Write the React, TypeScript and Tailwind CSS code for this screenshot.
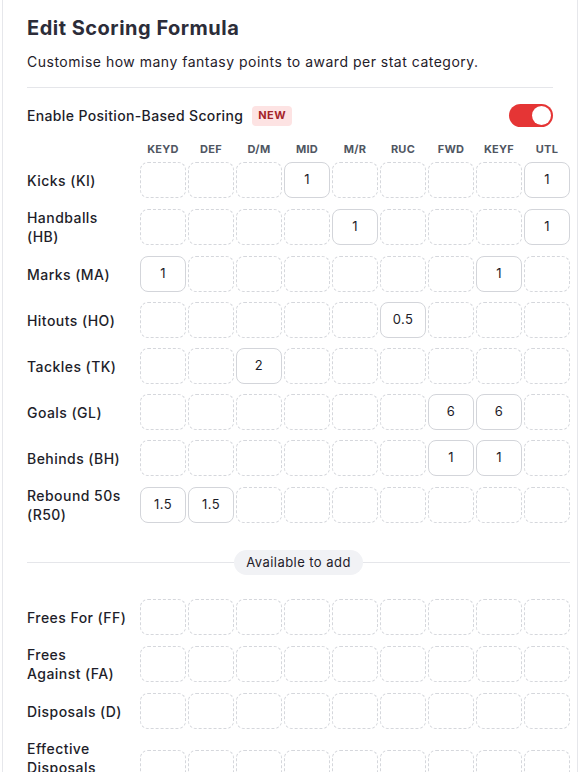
import { useState } from 'react'

const POSITIONS = ['KEYD', 'DEF', 'D/M', 'MID', 'M/R', 'RUC', 'FWD', 'KEYF', 'UTL'] as const

type Pos = (typeof POSITIONS)[number]

interface StatRow {
  label: string[]
  values: Partial<Record<Pos, string>>
}

const ACTIVE: StatRow[] = [
  { label: ['Kicks (KI)'], values: { MID: '1', UTL: '1' } },
  { label: ['Handballs', '(HB)'], values: { 'M/R': '1', UTL: '1' } },
  { label: ['Marks (MA)'], values: { KEYD: '1', KEYF: '1' } },
  { label: ['Hitouts (HO)'], values: { RUC: '0.5' } },
  { label: ['Tackles (TK)'], values: { 'D/M': '2' } },
  { label: ['Goals (GL)'], values: { FWD: '6', KEYF: '6' } },
  { label: ['Behinds (BH)'], values: { FWD: '1', KEYF: '1' } },
  { label: ['Rebound 50s', '(R50)'], values: { KEYD: '1.5', DEF: '1.5' } },
]

const AVAILABLE: StatRow[] = [
  { label: ['Frees For (FF)'], values: {} },
  { label: ['Frees', 'Against (FA)'], values: {} },
  { label: ['Disposals (D)'], values: {} },
  { label: ['Effective', 'Disposals', '(ED)'], values: {} },
]

function Cell({ value }: { value?: string }) {
  if (!value) {
    return <div className="w-[46px] h-9 rounded-lg border border-dashed border-[#d5d7dc]" />
  }
  return (
    <div className="w-[46px] h-9 rounded-lg border border-[#d3d5da] bg-white flex items-center justify-center text-[13px] text-[#1c1c28]">
      {value}
    </div>
  )
}

function Row({ row }: { row: StatRow }) {
  return (
    <div className="flex items-center">
      <div className="w-[113px] shrink-0 text-sm font-medium leading-[19px] text-[#1e1e2a]">
        {row.label.map(line => (
          <div key={line}>{line}</div>
        ))}
      </div>
      <div className="flex gap-[2px]">
        {POSITIONS.map(p => (
          <Cell key={p} value={row.values[p]} />
        ))}
      </div>
    </div>
  )
}

export default function App() {
  const [enabled, setEnabled] = useState(true)

  return (
    <div className="min-h-screen bg-white pl-[2px] pr-[4px] font-['Inter',sans-serif] tracking-[0.45px]">
      <div className="border-x border-[#e6e7eb] px-6 pt-[14px] pb-10">
        {/* Heading */}
        <h1 className="text-[20px] leading-7 font-bold tracking-[0.5px] text-[#2c2d39]">Edit Scoring Formula</h1>
        <p className="mt-[10px] text-sm leading-5 tracking-[0.5px] text-[#1f2029]">
          Customise how many fantasy points to award per stat category.
        </p>
        <div className="mt-[15px] h-px bg-[#e5e6ea]" />

        {/* Toggle */}
        <div className="mt-4 flex items-center h-[23px]">
          <span className="text-sm font-medium tracking-[0.35px] text-[#1e1e2a]">Enable Position-Based Scoring</span>
          <span className="ml-[9px] rounded px-[6px] h-5 flex items-center text-[11px] font-bold text-[#a5242a] bg-[#fde3e3]">
            NEW
          </span>
          <button
            onClick={() => setEnabled(v => !v)}
            className={`ml-auto w-11 h-[23px] rounded-full p-[2px] flex items-center ${enabled ? 'bg-[#e53535] justify-end' : 'bg-[#d1d5db] justify-start'}`}
          >
            <span className="w-[19px] h-[19px] rounded-full bg-white" />
          </button>
        </div>

        {/* Column headers */}
        <div className="mt-[14px] flex">
          <div className="w-[113px] shrink-0" />
          <div className="flex gap-[2px]">
            {POSITIONS.map(p => (
              <div key={p} className="w-[46px] text-center text-[11px] leading-4 font-bold tracking-wide text-[#505662]">
                {p}
              </div>
            ))}
          </div>
        </div>

        {/* Active stats */}
        <div className="mt-[5px] w-[543px] flex flex-col gap-[10px]">
          {ACTIVE.map(r => (
            <Row key={r.label.join(' ')} row={r} />
          ))}
        </div>

        {/* Divider */}
        <div className="mt-[26px] w-[543px] flex items-center">
          <div className="flex-1 h-px bg-[#e5e6ea]" />
          <span className="px-3 h-[25px] flex items-center rounded-full bg-[#f1f2f5] text-[13px] text-[#1f2029]">
            Available to add
          </span>
          <div className="flex-1 h-px bg-[#e5e6ea]" />
        </div>

        {/* Available stats */}
        <div className="mt-6 w-[543px] flex flex-col gap-[10px]">
          {AVAILABLE.map(r => (
            <Row key={r.label.join(' ')} row={r} />
          ))}
        </div>
      </div>
    </div>
  )
}
